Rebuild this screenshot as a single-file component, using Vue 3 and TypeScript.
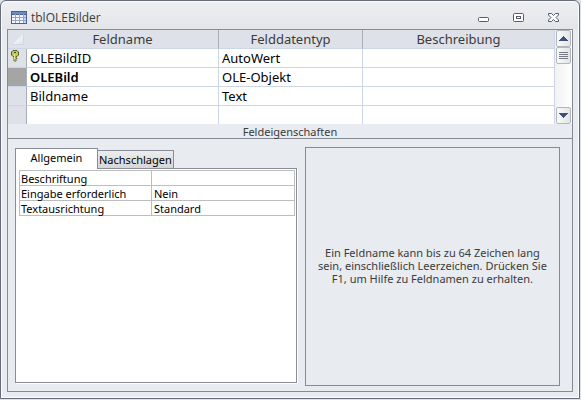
<script setup lang="ts">
import { ref } from 'vue'

interface Field {
  name: string
  type: string
  key?: boolean
  current?: boolean
}

const fields: Field[] = [
  { name: 'OLEBildID', type: 'AutoWert', key: true },
  { name: 'OLEBild', type: 'OLE-Objekt', current: true },
  { name: 'Bildname', type: 'Text' },
  { name: '', type: '' },
]

const properties: { label: string; value: string }[] = [
  { label: 'Beschriftung', value: '' },
  { label: 'Eingabe erforderlich', value: 'Nein' },
  { label: 'Textausrichtung', value: 'Standard' },
]

const tabs = ['Allgemein', 'Nachschlagen']
const activeTab = ref(tabs[0])
</script>

<template>
  <main class="window">
    <header class="titlebar">
      <svg class="table-icon" width="16" height="13" viewBox="0 0 16 13" shape-rendering="crispEdges">
        <rect width="16" height="13" fill="#4a6191" />
        <rect x="1" y="1" width="14" height="2" fill="#6f8cc0" />
        <path d="M1 4h3v2H1zM5 4h3v2H5zM9 4h3v2H9zM1 7h3v2H1zM5 7h3v2H5zM9 7h3v2H9zM1 10h3v2H1zM5 10h3v2H5zM9 10h3v2H9z" fill="#f5f9ff" />
        <path d="M13 4h2v2h-2zM13 7h2v2h-2zM13 10h2v2h-2z" fill="#c6d8f1" />
        <path d="M4 3h1v9H4zM8 3h1v9H8zM12 3h1v9h-1zM1 6h14v1H1zM1 9h14v1H1z" fill="#8ea6cd" />
      </svg>
      <h1>tblOLEBilder</h1>
      <div class="controls">
        <button type="button" aria-label="Minimieren">
          <svg width="13" height="13" viewBox="0 0 13 13">
            <rect x="1.500" y="6.500" width="10" height="4" rx="1" fill="#fff" stroke="#555a70" />
          </svg>
        </button>
        <button type="button" aria-label="Maximieren">
          <svg width="13" height="13" viewBox="0 0 13 13">
            <rect x="1.500" y="2.500" width="10" height="8" rx="1" fill="#fff" stroke="#555a70" />
            <rect x="4.500" y="5.500" width="4" height="2" fill="#fff" stroke="#555a70" />
          </svg>
        </button>
        <button type="button" aria-label="Schließen">
          <svg width="13" height="13" viewBox="0 0 13 13">
            <path d="M1.500 2.500h3l2 2 2-2h3v1.500L9 6.500 11.500 9v1.500h-3l-2-2-2 2h-3V9L4 6.500 1.500 4z" fill="#fff" stroke="#555a70" />
          </svg>
        </button>
      </div>
    </header>

    <div class="frame">
      <section class="designer">
        <table class="fields">
          <colgroup>
            <col class="c-select" />
            <col class="c-name" />
            <col class="c-type" />
            <col />
          </colgroup>
          <thead>
            <tr>
              <th class="corner">
                <svg width="12" height="12" viewBox="0 0 12 12">
                  <defs>
                    <linearGradient id="corner-fill" x1="0" y1="0" x2="1" y2="1">
                      <stop offset=".4" stop-color="#f2f5f9" />
                      <stop offset="1" stop-color="#dbe3ef" />
                    </linearGradient>
                  </defs>
                  <path d="M11.500.5v11H.5z" fill="url(#corner-fill)" />
                  <path d="M11.500.5v11H.5" fill="none" stroke="#cfd8e6" />
                </svg>
              </th>
              <th>Feldname</th>
              <th>Felddatentyp</th>
              <th>Beschreibung</th>
            </tr>
          </thead>
          <tbody>
            <tr v-for="(field, i) in fields" :key="i">
              <td class="selector" :class="{ current: field.current }">
                <svg v-if="field.key" width="8" height="12" viewBox="0 0 8 12">
                  <path d="M2 .5h4L7.500 2v3L6 6.500H5V8l1 .5-1 1 .5.500L4 11.500 3 10.500V6.500H2L.5 5V2z" fill="#bfca58" stroke="#59601f" />
                  <path d="M3 2.500h2" stroke="#454b16" />
                  <path d="M3.500 4.500v5" stroke="#e6ec9c" />
                </svg>
              </td>
              <td :class="{ strong: field.current }">{{ field.name }}</td>
              <td>{{ field.type }}</td>
              <td></td>
            </tr>
          </tbody>
        </table>
        <div class="scrollbar">
          <button type="button" aria-label="Nach oben">
            <svg width="9" height="5" viewBox="0 0 9 5" shape-rendering="crispEdges"><path d="M4 0h1v1h1v1h1v1h1v1h1v1H0V4h1V3h1V2h1V1h1z" fill="#3e4f7f" /></svg>
          </button>
          <button type="button" aria-label="Bildlauf">
            <svg width="9" height="7" viewBox="0 0 9 7" shape-rendering="crispEdges"><path d="M0 0h9v1H0zM0 2h9v1H0zM0 4h9v1H0zM0 6h9v1H0z" fill="#777c84" /></svg>
          </button>
          <button class="down" type="button" aria-label="Nach unten">
            <svg width="9" height="5" viewBox="0 0 9 5" shape-rendering="crispEdges"><path d="M0 0h9v1H8v1H7v1H6v1H5v1H4V4H3V3H2V2H1V1H0z" fill="#3e4f7f" /></svg>
          </button>
        </div>
      </section>

      <h2>Feldeigenschaften</h2>

      <section class="lower">
        <div class="props">
          <div class="tabs" role="tablist">
            <button
              v-for="tab in tabs"
              :key="tab"
              type="button"
              role="tab"
              :class="{ active: tab === activeTab }"
              :aria-selected="tab === activeTab"
              @click="activeTab = tab"
            >{{ tab }}</button>
          </div>
          <div class="pane">
            <table class="sheet">
              <tbody>
                <tr v-for="p in properties" :key="p.label">
                  <th scope="row">{{ p.label }}</th>
                  <td>{{ p.value }}</td>
                </tr>
              </tbody>
            </table>
          </div>
        </div>
        <aside class="hint">
          <p>Ein Feldname kann bis zu 64 Zeichen lang sein, einschließlich Leerzeichen. Drücken Sie F1, um Hilfe zu Feldnamen zu erhalten.</p>
        </aside>
      </section>
    </div>
  </main>
</template>

<style>
body {
  background: #dbe3ec;
}
</style>

<style scoped>
* {
  box-sizing: border-box;
}

.window {
  display: flex;
  flex-direction: column;
  min-height: calc(100vh - 1px);
  margin-right: 1px;
  padding: 1px 6px 6px;
  border: 1px solid #656c78;
  border-radius: 6px 6px 0 0;
  background: linear-gradient(#eeeff2, #e3e5e9 28px, #e9ebf0 29px);
  box-shadow: inset 0 0 0 1px #fbfcfd;
  color: #000;
  font: 11px/13px "Noto Sans", "Open Sans", sans-serif;
}

button {
  margin: 0;
  padding: 0;
  font: inherit;
}

svg {
  display: block;
}

.titlebar {
  display: flex;
  align-items: center;
  height: 27px;
  padding: 4px 13px 0 4px;
}

h1 {
  flex: 1;
  margin: 0 0 0 4px;
  color: #3b3b3b;
  font-family: "Open Sans", "Noto Sans", sans-serif;
  font-size: 12px;
  font-weight: 400;
  line-height: 16px;
}

.controls {
  display: flex;
  gap: 22px;
}

.controls button {
  border: 0;
  background: none;
}

.frame {
  display: flex;
  flex: 1;
  flex-direction: column;
  border: 1px solid #868b93;
  background: #e8ebf0;
}

.designer {
  display: flex;
}

.fields {
  flex: 1;
  width: 0;
  border-collapse: separate;
  border-spacing: 0;
  table-layout: fixed;
  background: #fff;
  font-size: 13px;
  line-height: 18px;
}

.c-select {
  width: 19px;
}

.c-name {
  width: 192px;
}

.c-type {
  width: 144px;
}

.fields th,
.fields td {
  height: 19px;
  padding: 0 3px;
  border-right: 1px solid #cdd6e6;
  border-bottom: 1px solid #cdd6e6;
  text-align: left;
  white-space: nowrap;
}

.fields th {
  background: #dee2e8;
  border-right-color: #a9adb5;
  color: #3b3b3b;
  font-weight: 400;
  text-align: center;
}

.fields th:last-child {
  border-right-color: #cdd6e6;
}

.fields th.corner {
  padding: 0 3px 0 4px;
  border-right-color: #dee2e8;
}

.fields td.selector {
  padding: 1px 3px 0;
  background: #dee2e8;
  border-right-color: #a9adb5;
  vertical-align: top;
}

.fields td.current {
  background: #a5a5a5;
}

.strong {
  font-weight: 600;
}

.fields tr:last-child td {
  height: 18px;
  border-bottom: 0;
}

.scrollbar {
  display: flex;
  flex-direction: column;
  width: 17px;
  padding: 0 1px;
  background: linear-gradient(90deg, #f2f2f3, #fff);
}

.scrollbar button {
  display: flex;
  align-items: center;
  justify-content: center;
  height: 17px;
  border: 1px solid #b3b6bb;
  border-radius: 2px;
  background: linear-gradient(90deg, #fafafa, #e3e4e6);
}

.scrollbar .down {
  margin-top: auto;
}

h2 {
  margin: 0;
  height: 15px;
  border-bottom: 1px solid #868b93;
  color: #3b3b3b;
  font-size: 11px;
  font-weight: 400;
  line-height: 16px;
  text-align: center;
}

.lower {
  display: grid;
  flex: 1;
  grid-template-columns: minmax(0, 21fr) minmax(0, 19fr);
  gap: 8px;
  padding: 8px 12px 5px 7px;
}

.props {
  display: flex;
  flex-direction: column;
  padding: 1px 0 3px;
}

.tabs {
  display: flex;
  align-items: flex-end;
}

.tabs button {
  height: 18px;
  padding: 0 1px;
  border: solid #8a8c98;
  border-width: 1px 1px 0 0;
  background: linear-gradient(#ededee, #d5d6d9);
}

.tabs .active {
  z-index: 1;
  width: 83px;
  height: 21px;
  margin-bottom: -1px;
  padding-bottom: 3px;
  border-width: 1px 1px 0;
  background: #fff;
}

.pane {
  flex: 1;
  padding: 1px 1px 0 3px;
  border: 1px solid #8a8c98;
  background: #fff;
  box-shadow: 1px 1px #fff;
}

.sheet {
  width: 100%;
  border-collapse: collapse;
  table-layout: fixed;
}

.sheet th,
.sheet td {
  height: 15px;
  padding: 0 2px;
  border: 1px solid #bdbdbd;
  font-weight: 400;
  text-align: left;
}

.sheet th {
  width: 48%;
  padding-left: 1px;
}

.hint {
  display: flex;
  align-items: center;
  justify-content: center;
  padding: 0 8px 2px;
  border: 1px solid #868b93;
}

.hint p {
  max-width: 232px;
  margin: 0;
  color: #3b3b3b;
  text-align: center;
}
</style>
